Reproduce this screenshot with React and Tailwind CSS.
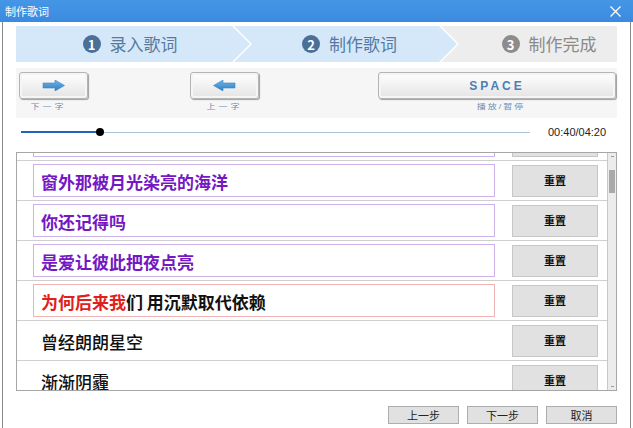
import React from 'react';

const lyrics = [
  { text: '', state: 'done', partial: true },
  { text: '窗外那被月光染亮的海洋', state: 'done' },
  { text: '你还记得吗', state: 'done' },
  { text: '是爱让彼此把夜点亮', state: 'done' },
  { text: '们 用沉默取代依赖', sung: '为何后来我', state: 'current' },
  { text: '曾经朗朗星空', state: 'todo' },
  { text: '渐渐阴霾', state: 'todo' },
];

const Arrow = ({ dir }) => (
  <svg width="23" height="11" viewBox="0 0 23 11" className={dir === 'left' ? '-scale-x-100' : ''}>
    <defs>
      <linearGradient id={`ag-${dir}`} x1="0" y1="0" x2="0" y2="1">
        <stop offset="0" stopColor="#72b6e8" />
        <stop offset="1" stopColor="#2c7cc2" />
      </linearGradient>
    </defs>
    <path d="M1 3 H13 V0 L22.5 5.5 L13 11 V8 H1 Z" fill={`url(#ag-${dir})`} stroke="#3a86c8" strokeWidth="0.6" />
  </svg>
);

const StepCircle = ({ n, gray }) => (
  <span
    className={`w-[18px] h-[18px] rounded-full flex items-center justify-center text-white text-[13px] font-bold leading-none ${
      gray ? 'bg-[#8c8c8c]' : 'bg-[#4b7097]'
    }`}
  >
    {n}
  </span>
);

const ToolButton = ({ children, className = '' }) => (
  <div
    className={`h-[27px] flex items-center justify-center rounded-[3px] border border-[#b4b4b4] bg-gradient-to-b from-white to-[#e4e4e4] shadow-[inset_0_0_0_2px_#f5f5f5,1px_1px_1px_#a0a0a0] ${className}`}
  >
    {children}
  </div>
);

const LyricRow = ({ row }) => {
  const boxBorder =
    row.state === 'done'
      ? 'border-[#cdb2ea]'
      : row.state === 'current'
      ? 'border-[#efb4b4]'
      : 'border-transparent';
  const textColor =
    row.state === 'done'
      ? 'text-[#7418c4] font-bold'
      : row.state === 'current'
      ? 'text-[#111] font-bold'
      : 'text-[#111] font-medium';
  return (
    <div className="h-[40px] shrink-0 flex items-center border-b border-[#cfcfcf]">
      <div className={`ml-[16px] w-[462px] h-[33px] border ${boxBorder} flex items-center pl-[7px] pt-[3px] text-[17px] ${textColor}`}>
        {row.sung && <span className="text-[#e0201c]">{row.sung}</span>}
        {row.text}
      </div>
      <div className="ml-[17px] w-[86px] h-[32px] bg-[#e1e1e1] border border-[#c6c6c6] flex items-center justify-center text-[11px] font-bold text-[#111]">
        {!row.partial && '重置'}
      </div>
    </div>
  );
};

export default function App() {
  return (
    <div className="w-[633px] h-[428px] bg-white overflow-hidden flex flex-col font-['Liberation_Sans','Noto_Sans_CJK_SC',sans-serif]">
      {/* title bar */}
      <div className="h-[22px] shrink-0 bg-gradient-to-b from-[#4696e6] to-[#3a8ae0] flex items-center justify-between pl-[5px] pr-[12px] text-white">
        <span className="text-[11px] font-['Noto_Sans_CJK_SC',sans-serif]">制作歌词</span>
        <svg width="11" height="11" viewBox="0 0 11 11">
          <path d="M0.5 0.5 L10.5 10.5 M10.5 0.5 L0.5 10.5" stroke="white" strokeWidth="1.3" />
        </svg>
      </div>

      <div className="flex-1 ml-[2px] mr-[2px] border-l border-r border-[#8a8a8a] px-[13px] flex flex-col">
        {/* steps */}
        <div className="mt-[4px] h-[36px] flex text-[17px] font-['Noto_Sans_CJK_SC',sans-serif]">
          <div className="w-[234px] bg-[#d5e8f9] flex items-center justify-center gap-[9px] pr-[6px] text-[#557aa0] [clip-path:polygon(0_0,calc(100%_-_18px)_0,100%_50%,calc(100%_-_18px)_100%,0_100%)]">
            <StepCircle n="1" />
            <span>录入歌词</span>
          </div>
          <div className="-ml-[16px] w-[223px] bg-[#d5e8f9] flex items-center justify-center gap-[9px] pl-[8px] text-[#557aa0] [clip-path:polygon(0_0,calc(100%_-_18px)_0,100%_50%,calc(100%_-_18px)_100%,0_100%,18px_50%)]">
            <StepCircle n="2" />
            <span>制作歌词</span>
          </div>
          <div className="-ml-[16px] flex-1 bg-[#ededed] flex items-center justify-center gap-[9px] pl-[40px] text-[#8a8a8a] [clip-path:polygon(0_0,100%_0,100%_100%,0_100%,18px_50%)]">
            <StepCircle n="3" gray />
            <span>制作完成</span>
          </div>
        </div>

        {/* controls */}
        <div className="mt-[6px] h-[50px] bg-[#f6f6f6] flex items-start pt-[4px] pl-[3px] text-[#6b8fb8]">
          <div className="w-[69px] flex flex-col items-center">
            <ToolButton className="w-[69px]">
              <Arrow dir="right" />
            </ToolButton>
            <span className="mt-[4px] text-[9px] tracking-[3px] leading-none scale-y-75 -translate-x-[5px]">下一字</span>
          </div>
          <div className="ml-[102px] w-[69px] flex flex-col items-center">
            <ToolButton className="w-[69px]">
              <Arrow dir="left" />
            </ToolButton>
            <span className="mt-[4px] text-[9px] tracking-[3px] leading-none scale-y-75">上一字</span>
          </div>
          <div className="ml-[119px] w-[238px] flex flex-col items-center">
            <ToolButton className="w-[238px]">
              <span className="text-[12px] font-bold tracking-[3px] text-[#4a7fb2]">SPACE</span>
            </ToolButton>
            <span className="mt-[4px] text-[9px] tracking-[2px] leading-none scale-y-75 translate-x-[4px]">播放/暂停</span>
          </div>
        </div>

        {/* progress */}
        <div className="mt-[4px] h-[20px] flex items-center">
          <div className="ml-[5px] w-[509px] flex items-center">
            <div className="w-[79px] h-[2px] bg-[#2262b8]" />
            <div className="w-[8px] h-[8px] rounded-full bg-black -mx-[4px] relative" />
            <div className="flex-1 h-px bg-[#a9c3d8]" />
          </div>
          <span className="ml-[18px] text-[11px] text-[#222]">00:40/04:20</span>
        </div>

        {/* lyric list */}
        <div className="mt-[10px] h-[239px] border border-[#a6a6a6] flex overflow-hidden">
          <div className="flex-1 overflow-hidden">
            <div className="-mt-[32px] flex flex-col font-['Noto_Sans_CJK_SC',sans-serif]">
              {lyrics.map((row, i) => (
                <LyricRow key={i} row={row} />
              ))}
            </div>
          </div>
          <div className="w-[9px] bg-[#ececec] border-l border-[#c8c8c8] flex flex-col items-center">
            <span className="mt-[3px] w-[3px] h-px bg-[#999]" />
            <span className="mt-[13px] w-[6px] h-[23px] bg-[#a9a9a9]" />
            <span className="mt-auto mb-[3px] w-[3px] h-px bg-[#999]" />
          </div>
        </div>

        {/* footer */}
        <div className="mt-[15px] flex justify-end gap-[8px] text-[11px] text-[#222] font-['Noto_Sans_CJK_SC',sans-serif]">
          {['上一步', '下一步', '取消'].map((t) => (
            <div key={t} className="w-[71px] h-[18px] bg-[#e1e1e1] border border-[#adadad] flex items-center justify-center">
              {t}
            </div>
          ))}
        </div>
      </div>
    </div>
  );
}
